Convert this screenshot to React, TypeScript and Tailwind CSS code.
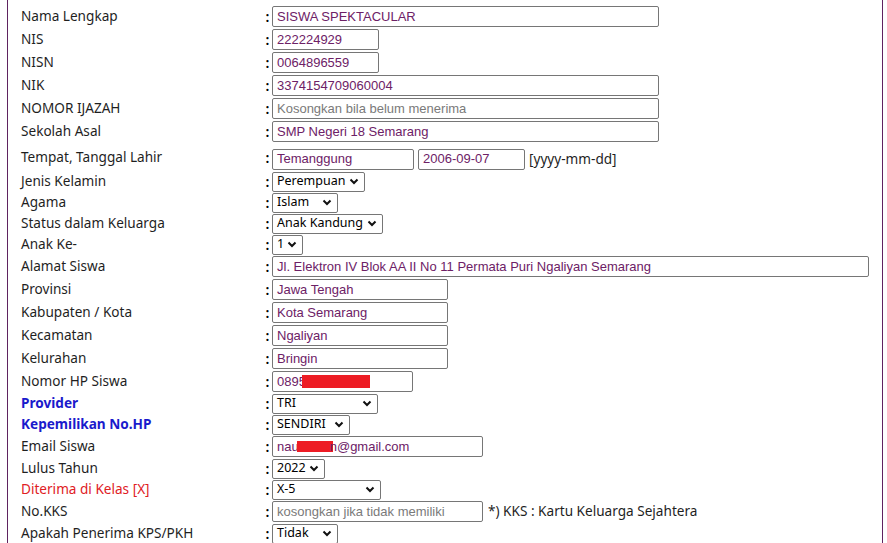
import React from "react";

const LBL = "font-['Noto_Sans',sans-serif]";

function Field({ w, children, ph }: { w: string; children?: React.ReactNode; ph?: boolean }) {
  return (
    <div
      className={`${w} h-[21px] shrink-0 border border-[#767676] rounded-[2px] flex items-center pl-[4px] text-[13px] font-['Liberation_Sans',Arial,sans-serif] whitespace-nowrap overflow-hidden ${
        ph ? "text-[#7a7a7a]" : "text-[#6d2166]"
      }`}
    >
      {children}
    </div>
  );
}

function Sel({ w, value }: { w: string; value: string }) {
  return (
    <div
      className={`${w} h-[20px] shrink-0 border border-[#767676] rounded-[2px] flex items-center justify-between pl-[4px] pr-[5px] text-[12.5px] text-black whitespace-nowrap ${LBL}`}
    >
      <span>{value}</span>
      <svg width="10" height="7" viewBox="0 0 10 7" className="shrink-0 ml-[3px]">
        <path d="M1.5 1.5 L5 5 L8.5 1.5" stroke="#111" strokeWidth="2" fill="none" />
      </svg>
    </div>
  );
}

function Row({
  label,
  h,
  color,
  children,
}: {
  label: string;
  h: string;
  color?: string;
  children: React.ReactNode;
}) {
  return (
    <div className={`flex items-center ${h}`}>
      <div className={`w-[244px] shrink-0 text-[13.6px] whitespace-nowrap ${LBL} ${color ?? "text-[#1f1f1f]"}`}>
        {label}
      </div>
      <span className={`w-[5px] shrink-0 text-center text-[14px] font-semibold text-black ${LBL}`}>:</span>
      <div className="ml-[2px] flex items-center">{children}</div>
    </div>
  );
}

export default function App() {
  return (
    <div className="w-[887px] h-[543px] overflow-hidden bg-white">
      <div className="ml-[7px] w-[876px] h-[543px] border-x border-[#5f2360] pt-[5px] pl-[13px]">
        <Row label="Nama Lengkap" h="h-[23px]">
          <Field w="w-[387px]">SISWA SPEKTACULAR</Field>
        </Row>
        <Row label="NIS" h="h-[23px]">
          <Field w="w-[107px]">222224929</Field>
        </Row>
        <Row label="NISN" h="h-[23px]">
          <Field w="w-[107px]">0064896559</Field>
        </Row>
        <Row label="NIK" h="h-[23px]">
          <Field w="w-[387px]">3374154709060004</Field>
        </Row>
        <Row label="NOMOR IJAZAH" h="h-[23px]">
          <Field w="w-[387px]" ph>
            Kosongkan bila belum menerima
          </Field>
        </Row>
        <Row label="Sekolah Asal" h="h-[23px]">
          <Field w="w-[387px]">SMP Negeri 18 Semarang</Field>
        </Row>
        <Row label="Tempat, Tanggal Lahir" h="h-[28px]">
          <div className="mt-[4px] flex items-center">
            <Field w="w-[142px]">Temanggung</Field>
            <div className="ml-[4px]">
              <Field w="w-[107px]">2006-09-07</Field>
            </div>
            <span className={`ml-[4px] text-[13.6px] text-[#1f1f1f] ${LBL}`}>[yyyy-mm-dd]</span>
          </div>
        </Row>
        <Row label="Jenis Kelamin" h="h-[21px]">
          <Sel w="w-[93px]" value="Perempuan" />
        </Row>
        <Row label="Agama" h="h-[21px]">
          <Sel w="w-[66px]" value="Islam" />
        </Row>
        <Row label="Status dalam Keluarga" h="h-[21px]">
          <Sel w="w-[111px]" value="Anak Kandung" />
        </Row>
        <Row label="Anak Ke-" h="h-[21px]">
          <Sel w="w-[31px]" value="1" />
        </Row>
        <Row label="Alamat Siswa" h="h-[23px]">
          <Field w="w-[597px]">Jl. Elektron IV Blok AA II No 11 Permata Puri Ngaliyan Semarang</Field>
        </Row>
        <Row label="Provinsi" h="h-[23px]">
          <Field w="w-[176px]">Jawa Tengah</Field>
        </Row>
        <Row label="Kabupaten / Kota" h="h-[23px]">
          <Field w="w-[176px]">Kota Semarang</Field>
        </Row>
        <Row label="Kecamatan" h="h-[23px]">
          <Field w="w-[176px]">Ngaliyan</Field>
        </Row>
        <Row label="Kelurahan" h="h-[23px]">
          <Field w="w-[176px]">Bringin</Field>
        </Row>
        <Row label="Nomor HP Siswa" h="h-[23px]">
          <Field w="w-[141px]">
            <span>0895</span>
            <span className="ml-[-4px] inline-block w-[68px] h-[13px] bg-[#ed1c24]" />
          </Field>
        </Row>
        <Row label="Provider" h="h-[21px]" color="text-[#1a1acc] font-bold">
          <Sel w="w-[106px]" value="TRI" />
        </Row>
        <Row label="Kepemilikan No.HP" h="h-[21px]" color="text-[#1a1acc] font-bold">
          <Sel w="w-[78px]" value="SENDIRI" />
        </Row>
        <Row label="Email Siswa" h="h-[23px]">
          <Field w="w-[211px]">
            <span>nau</span>
            <span className="ml-[-2px] inline-block w-[36px] h-[11px] bg-[#ed1c24]" />
            <span className="ml-[-3px]">n@gmail.com</span>
          </Field>
        </Row>
        <Row label="Lulus Tahun" h="h-[21px]">
          <Sel w="w-[53px]" value="2022" />
        </Row>
        <Row label="Diterima di Kelas [X]" h="h-[21px]" color="text-[#e0201f]">
          <Sel w="w-[109px]" value="X-5" />
        </Row>
        <Row label="No.KKS" h="h-[23px]">
          <Field w="w-[211px]" ph>
            kosongkan jika tidak memiliki
          </Field>
          <span className={`ml-[5px] text-[13.6px] text-[#1f1f1f] whitespace-nowrap ${LBL}`}>
            *) KKS : Kartu Keluarga Sejahtera
          </span>
        </Row>
        <Row label="Apakah Penerima KPS/PKH" h="h-[21px]">
          <Sel w="w-[66px]" value="Tidak" />
        </Row>
      </div>
    </div>
  );
}
